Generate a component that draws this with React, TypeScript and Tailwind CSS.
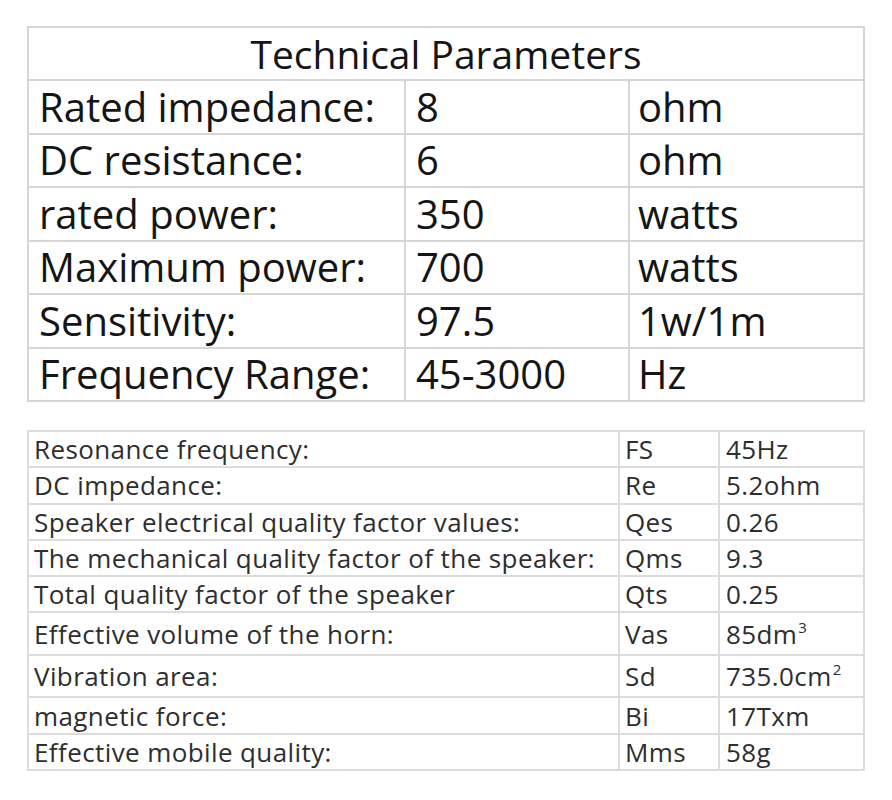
import React from "react";

type Row = [string, string, string];

const mainRows: Row[] = [
  ["Rated impedance:", "8", "ohm"],
  ["DC resistance:", "6", "ohm"],
  ["rated power:", "350", "watts"],
  ["Maximum power:", "700", "watts"],
  ["Sensitivity:", "97.5", "1w/1m"],
  ["Frequency Range:", "45-3000", "Hz"],
];

const tsRows: { label: string; sym: string; value: React.ReactNode; tall?: boolean }[] = [
  { label: "Resonance frequency:", sym: "FS", value: "45Hz" },
  { label: "DC impedance:", sym: "Re", value: "5.2ohm" },
  { label: "Speaker electrical quality factor values:", sym: "Qes", value: "0.26" },
  { label: "The mechanical quality factor of the speaker:", sym: "Qms", value: "9.3" },
  { label: "Total quality factor of the speaker", sym: "Qts", value: "0.25" },
  {
    label: "Effective volume of the horn:",
    sym: "Vas",
    value: (
      <>
        85dm<sup className="-top-[11px] ml-[1px] text-[15px]">3</sup>
      </>
    ),
    tall: true,
  },
  {
    label: "Vibration area:",
    sym: "Sd",
    value: (
      <>
        735.0cm<sup className="-top-[11px] ml-[1px] text-[15px]">2</sup>
      </>
    ),
    tall: true,
  },
  { label: "magnetic force:", sym: "Bi", value: "17Txm" },
  { label: "Effective mobile quality:", sym: "Mms", value: "58g" },
];

const App: React.FC = () => {
  return (
    <div className="min-h-[800px] w-[892px] bg-white pl-[27px] pt-[26px] font-['Open_Sans',sans-serif]">
      {/* Main parameters */}
      <table className="w-[836px] table-fixed border-collapse text-[#151515]">
        <colgroup>
          <col className="w-[377px]" />
          <col className="w-[224px]" />
          <col className="w-[235px]" />
        </colgroup>
        <tbody>
          <tr className="h-[53px]">
            <td colSpan={3} className="border-2 border-[#d6d6d6] text-center text-[39px] leading-none">
              Technical Parameters
            </td>
          </tr>
          {mainRows.map(([label, value, unit]) => (
            <tr key={label} className="h-[53.5px]">
              <td className="border-2 border-[#d6d6d6] pl-[10px] text-[40px] leading-none">{label}</td>
              <td className="border-2 border-[#d6d6d6] pl-[10px] text-[40px] leading-none">{value}</td>
              <td className="border-2 border-[#d6d6d6] pl-[8px] text-[40px] leading-none">{unit}</td>
            </tr>
          ))}
        </tbody>
      </table>

      {/* Thiele-Small parameters */}
      <table className="mt-[28px] w-[836px] table-fixed border-collapse text-[#2e2e2e]">
        <colgroup>
          <col className="w-[591px]" />
          <col className="w-[100px]" />
          <col className="w-[145px]" />
        </colgroup>
        <tbody>
          {tsRows.map((r) => (
            <tr key={r.sym} className={r.tall ? "h-[42.5px]" : "h-[36.3px]"}>
              <td className="border-2 border-[#dcdcdc] pl-[5px] text-[26px] leading-none tracking-[0.4px]">
                {r.label}
              </td>
              <td className="border-2 border-[#dcdcdc] pl-[5px] text-[26px] leading-none tracking-[0.4px]">
                {r.sym}
              </td>
              <td className="border-2 border-[#dcdcdc] pl-[6px] text-[26px] leading-none tracking-[0.4px]">
                {r.value}
              </td>
            </tr>
          ))}
        </tbody>
      </table>
    </div>
  );
};

export default App;
